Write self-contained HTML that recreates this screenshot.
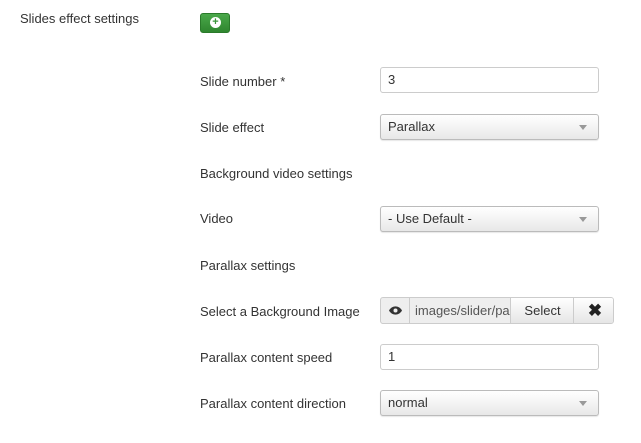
<!DOCTYPE html><html><head><style>
body{margin:0;width:641px;height:443px;background:#fff;font-family:"Liberation Sans",sans-serif;font-size:13px;color:#333;position:relative;overflow:hidden}
.a{position:absolute}
.l{position:absolute;left:200px;line-height:18px}
.in{position:absolute;left:380px;width:219px;height:26px;box-sizing:border-box;border:1px solid #ccc;border-radius:3px;padding:0 7px;line-height:24px;background:#fff}
.sel{background:linear-gradient(#fff,#e8e8e8);border-color:#bbb;box-shadow:0 1px 1px rgba(0,0,0,.1)}
.sel:after{content:"";position:absolute;right:11px;top:10px;border:4px solid transparent;border-top:5px solid #999}
</style></head><body>
<div class="a" style="left:20px;top:10px;line-height:18px">Slides effect settings</div>
<div class="a" style="left:200px;top:13px;width:30px;height:20px;border-radius:3px;background:linear-gradient(#4aa84a,#2f862f);border:1px solid #2a7a2a;box-sizing:border-box"><div class="a" style="left:9px;top:3px;width:11px;height:11px;border-radius:50%;background:#fff;color:#3a953a;font-size:11px;font-weight:bold;line-height:11px;text-align:center">+</div></div>
<div class="l" style="top:73px">Slide number *</div>
<div class="in" style="top:67px">3</div>
<div class="l" style="top:119px">Slide effect</div>
<div class="in sel" style="top:114px">Parallax</div>
<div class="l" style="top:165px">Background video settings</div>
<div class="l" style="top:210px">Video</div>
<div class="in sel" style="top:206px">- Use Default -</div>
<div class="l" style="top:257px">Parallax settings</div>
<div class="l" style="top:303px">Select a Background Image</div>
<div class="a" style="left:380px;top:297px;width:234px;height:27px;box-sizing:border-box;border:1px solid #ccc;border-radius:3px;background:#eee;overflow:hidden">
<svg class="a" style="left:8px;top:8px" width="13" height="9" viewBox="0 0 13 9"><path d="M0 4.5C3-1 10-1 13 4.5C10 10 3 10 0 4.5Z" fill="#333"/><circle cx="6.5" cy="4.5" r="2" fill="#eee"/></svg>
<div class="a" style="left:28px;top:0;width:101px;height:25px;border-left:1px solid #ccc;line-height:25px;padding-left:5px;box-sizing:border-box;color:#555;white-space:nowrap;overflow:hidden">images/slider/pa</div>
<div class="a" style="left:129px;top:0;width:63px;height:25px;border-left:1px solid #ccc;background:linear-gradient(#fff,#e6e6e6);text-align:center;line-height:25px">Select</div>
<div class="a" style="left:192px;top:0;width:42px;height:25px;border-left:1px solid #ccc;background:linear-gradient(#fff,#e6e6e6);text-align:center;line-height:25px;font-weight:bold;font-size:17px;color:#222">✖</div>
</div>
<div class="l" style="top:349px">Parallax content speed</div>
<div class="in" style="top:344px">1</div>
<div class="l" style="top:395px">Parallax content direction</div>
<div class="in sel" style="top:390px">normal</div>
</body></html>
